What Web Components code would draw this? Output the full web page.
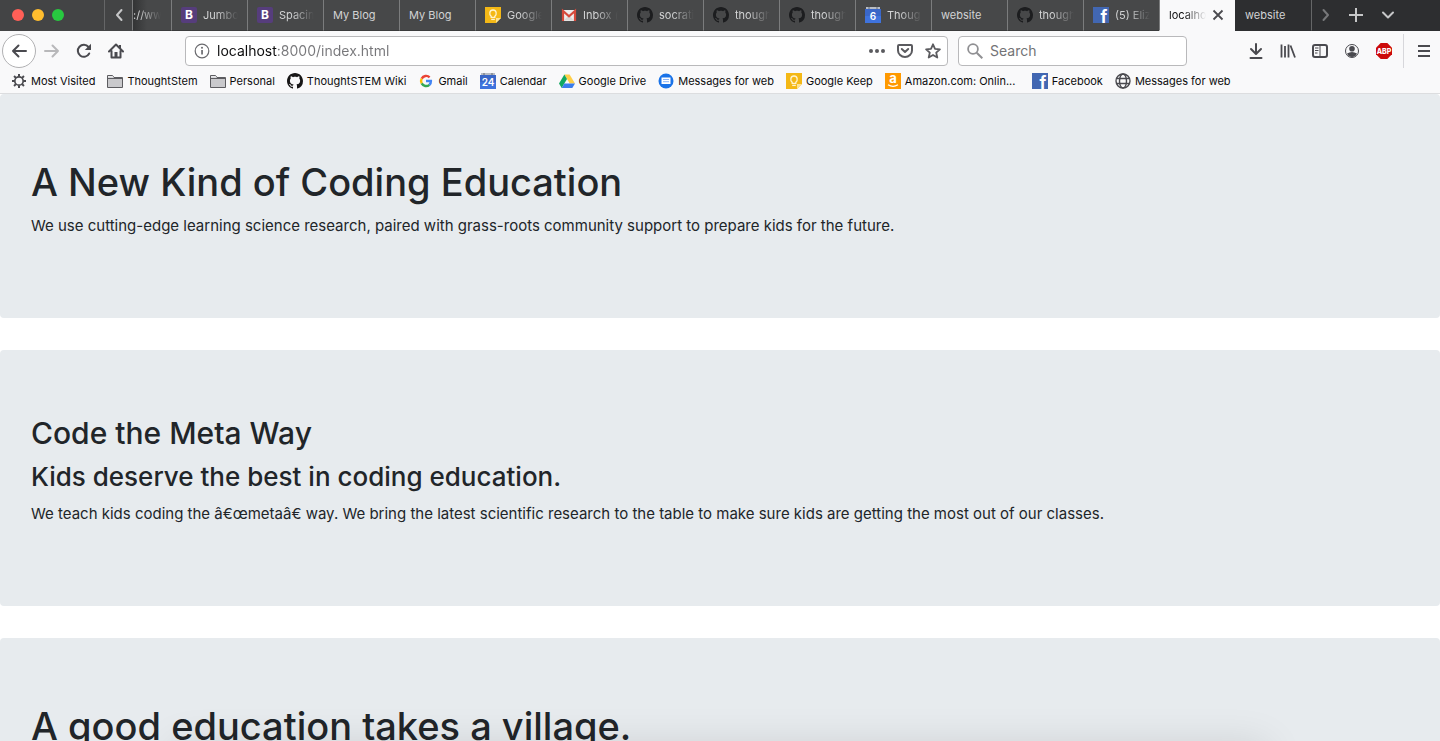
<!DOCTYPE html>
<html lang="en">
<head>
<meta charset="utf-8">
<title>website</title>
<style>
  html, body { margin: 0; height: 100%; }
  body { font-family: Inter, "Liberation Sans", sans-serif; background: #fff; color: #212529; overflow: hidden; }
</style>
</head>
<body>
<browser-window>
  <tab-strip slot="tabs">
    <browser-tab cut>://ww</browser-tab>
    <browser-tab icon="bootstrap">Jumbo</browser-tab>
    <browser-tab icon="bootstrap">Spacin</browser-tab>
    <browser-tab>My Blog</browser-tab>
    <browser-tab>My Blog</browser-tab>
    <browser-tab icon="keep">Google</browser-tab>
    <browser-tab icon="gmail">Inbox (</browser-tab>
    <browser-tab icon="github-dark">socrati</browser-tab>
    <browser-tab icon="github-dark">though</browser-tab>
    <browser-tab icon="github-dark">though</browser-tab>
    <browser-tab icon="cal6">Thoug</browser-tab>
    <browser-tab>website</browser-tab>
    <browser-tab icon="github-dark">though</browser-tab>
    <browser-tab icon="facebook">(5) Eliz</browser-tab>
    <browser-tab active>localho</browser-tab>
    <browser-tab after>website</browser-tab>
  </tab-strip>
  <nav-toolbar slot="nav"></nav-toolbar>
  <bookmark-bar slot="bookmarks">
    <bookmark-item icon="gear">Most Visited</bookmark-item>
    <bookmark-item icon="folder">ThoughtStem</bookmark-item>
    <bookmark-item icon="folder">Personal</bookmark-item>
    <bookmark-item icon="github">ThoughtSTEM Wiki</bookmark-item>
    <bookmark-item icon="google">Gmail</bookmark-item>
    <bookmark-item icon="cal24">Calendar</bookmark-item>
    <bookmark-item icon="drive">Google Drive</bookmark-item>
    <bookmark-item icon="messages">Messages for web</bookmark-item>
    <bookmark-item icon="keep">Google Keep</bookmark-item>
    <bookmark-item icon="amazon" truncated>Amazon.com: Onlin...</bookmark-item>
    <bookmark-item icon="facebook">Facebook</bookmark-item>
    <bookmark-item icon="globe">Messages for web</bookmark-item>
  </bookmark-bar>
  <jumbo-tron>
    <h1 slot="title">A New Kind of Coding Education</h1>
    <p slot="text">We use cutting-edge learning science research, paired with grass-roots community support to prepare kids for the future.</p>
  </jumbo-tron>
  <jumbo-tron>
    <h2 slot="title">Code the Meta Way</h2>
    <h3 slot="subtitle">Kids deserve the best in coding education.</h3>
    <p slot="text">We teach kids coding the â€œmetaâ€ way. We bring the latest scientific research to the table to make sure kids are getting the most out of our classes.</p>
  </jumbo-tron>
  <jumbo-tron>
    <h1 slot="title">A good education takes a village.</h1>
  </jumbo-tron>
</browser-window>

<script>
const GITHUB = 'M8 0C3.58 0 0 3.58 0 8c0 3.54 2.29 6.53 5.47 7.59.4.07.55-.17.55-.38 0-.19-.01-.82-.01-1.49-2.01.37-2.53-.49-2.69-.94-.09-.23-.48-.94-.82-1.13-.28-.15-.68-.52-.01-.53.63-.01 1.08.58 1.23.82.72 1.21 1.87.87 2.33.66.07-.52.28-.87.51-1.07-1.78-.2-3.64-.89-3.64-3.95 0-.87.31-1.59.82-2.15-.08-.2-.36-1.02.08-2.12 0 0 .67-.21 2.2.82.64-.18 1.32-.27 2-.27.68 0 1.36.09 2 .27 1.53-1.04 2.2-.82 2.2-.82.44 1.1.16 1.92.08 2.12.51.56.82 1.27.82 2.15 0 3.07-1.87 3.75-3.65 3.95.29.25.54.73.54 1.48 0 1.07-.01 1.93-.01 2.2 0 .21.15.46.55.38A8.013 8.013 0 0016 8c0-4.42-3.58-8-8-8z';
const calendar = (n, size) => `<path d="M1 0h14v3H1z" fill="#b9bdc4"/><path d="M3 0h2v2H3zM11 0h2v2h-2z" fill="#8f949c"/><path d="M0 2h16v14H0z" fill="#3f73dd"/><path d="M0 2h16v7H0z" fill="#3a67c8"/><text x="8" y="13" font-size="${size}" font-weight="600" text-anchor="middle" fill="#fff">${n}</text>`;
const line = (d, w = 2) => `<path d="${d}" fill="none" stroke="currentColor" stroke-width="${w}" stroke-linecap="round" stroke-linejoin="round"/>`;
const ICONS = {
  bootstrap: '<rect width="16" height="16" rx="2" fill="#563d7c"/><text x="8" y="12" font-size="12" font-weight="700" text-anchor="middle" fill="#fff">B</text>',
  keep: '<path d="M0 0h16v11l-5 5H0z" fill="#f4b816"/><path d="M11 16v-5h5z" fill="#fde293"/><path d="M6.200 9.400C4 7.800 4.200 3 8 3s4 4.800 1.800 6.400v1H6.200z" fill="none" stroke="#fff3cf" stroke-width="1.300"/><path d="M6.200 12.400h3.600" stroke="#fff3cf" stroke-width="1.300"/>',
  gmail: '<path d="M1 3h14v11H1z" fill="#eee"/><path d="M3 13.500 8 8l5 5.500z" fill="#d8d8d8"/><path d="M2 14V4l6 5.300L14 4v10" fill="none" stroke="#d54b3d" stroke-width="2.200"/>',
  'github-dark': `<path d="${GITHUB}" fill="#1c1d1f"/>`,
  github: `<path d="${GITHUB}" fill="#181717"/>`,
  cal6: calendar('6', 10),
  cal24: calendar('24', 10),
  facebook: '<path d="M0 0h16v16H0z" fill="#4267b2"/><text x="11" y="16" font-size="17" font-weight="700" text-anchor="middle" fill="#fff">f</text>',
  gear: '<circle cx="8" cy="8" r="4.200" fill="none" stroke="#4a4a4f" stroke-width="1.700"/><path d="M8 1v2.500M8 12.500V15M1 8h2.500M12.500 8H15M3.050 3.050l1.800 1.800M11.150 11.150l1.800 1.800M3.050 12.950l1.800-1.800M11.150 4.850l1.800-1.800" stroke="#4a4a4f" stroke-width="2"/>',
  folder: '<path d="M.5 14V2.500h5l1.500 2h8.500V14.500H.5z" fill="#c9c9cc" stroke="#5c5c60"/><path d="M1 5.500h14" stroke="#5c5c60"/><path d="M1 3h4.500l1 1.500H1z" fill="#e8e8ea"/>',
  google: '<g fill="none" stroke-width="2.400"><path d="M11.600 4.300A5 5 0 0 0 3.700 5.600" stroke="#ea4335"/><path d="M3.700 5.600a5 5 0 0 0 0 4.800" stroke="#fbbc05"/><path d="M3.700 10.400a5 5 0 0 0 7.700 1.400" stroke="#34a853"/><path d="M11.400 11.800A5 5 0 0 0 12.900 8H8" stroke="#4285f4"/></g>',
  drive: '<path d="M5.400 1.500h5.200L16 10.500h-5.300z" fill="#ffcf48"/><path d="M5.400 1.500 8 6l-5.300 9L0 10.500z" fill="#11a861"/><path d="M5.300 10.500H16L13.300 15H2.700z" fill="#3b7ded"/>',
  messages: '<circle cx="8" cy="8" r="7.500" fill="#1a73e8"/><path d="M3.500 4.500h9v6.500h-7l-2 0z" fill="#fff"/><path d="M5 6.500h6M5 8.700h6" stroke="#8ab4f8"/>',
  amazon: '<path d="M0 0h16v16H0z" fill="#ff9900"/><text x="8" y="10" font-size="13" font-weight="700" text-anchor="middle" fill="#fff">a</text><path d="M3 11.800q5 3 10 0" fill="none" stroke="#fff" stroke-width="1.200"/>',
  globe: '<g fill="none" stroke="#4a4a4f" stroke-width="1.400"><circle cx="8" cy="8" r="7"/><ellipse cx="8" cy="8" rx="3.500" ry="7"/><path d="M1.500 5.500h13M1.500 10.500h13"/></g>',
  back: line('M15 8H2M7.500 2.500 2 8l5.500 5.500'),
  forward: line('M1 8h13M8.500 2.500 14 8l-5.500 5.500'),
  reload: '<path d="M13.200 10.500A6 6 0 1 1 12.500 4" fill="none" stroke="currentColor" stroke-width="2" stroke-linecap="round"/><path d="M15 .8V7H8.800z" fill="currentColor"/>',
  home: line('M1 8.500 8 1.500l7 7M3.500 8v6.500h9V8') + '<path d="M6.500 9h3v6h-3zM11 2h2v4l-2-2z" fill="currentColor"/>',
  info: '<circle cx="8" cy="8" r="6.800" fill="none" stroke="currentColor" stroke-width="1.200"/><path d="M7.200 7h1.700v4.500H7.200z" fill="currentColor"/><circle cx="8" cy="4.800" r="1" fill="currentColor"/>',
  dots: '<g fill="currentColor"><circle cx="2" cy="8" r="2"/><circle cx="8" cy="8" r="2"/><circle cx="14" cy="8" r="2"/></g>',
  pocket: line('M2 2h12q1 0 1 1v4.500a7 6.500 0 0 1-14 0V3q0-1 1-1z') + line('M4.800 6 8 9l3.200-3'),
  star: line('M8 1.300 10 5.800l4.900.5-3.700 3.300 1.100 4.900L8 12l-4.300 2.500 1.100-4.900L1.100 6.300 6 5.800z', 1.8),
  search: '<circle cx="6" cy="6" r="4.900" fill="none" stroke="currentColor" stroke-width="1.800"/><path d="m9.700 9.700 5.600 5.600" stroke="currentColor" stroke-width="2"/>',
  download: line('M8 1v9.500M3 6l5 5 5-5M2.500 15h11'),
  library: '<path d="M1.500 1.500v13M5 3v11.500M8.500 1.500v13M10.500 2.500l4.500 12" fill="none" stroke="currentColor" stroke-width="1.800"/>',
  sidebar: '<rect x="1" y="2" width="14" height="12" rx="2" fill="none" stroke="currentColor" stroke-width="2"/><path d="M8 2v12" stroke="currentColor"/><path d="M3 5h3.500M3 7.500h3.500M3 10h2.500" stroke="currentColor"/>',
  account: '<circle cx="8" cy="8" r="6.500" fill="none" stroke="currentColor"/><circle cx="8" cy="5.800" r="2.800" fill="currentColor"/><path d="M3 10.500q5-3 10 0-1.500 3.500-5 3.500t-5-3.500z" fill="currentColor"/>',
  abp: '<path d="M4.700 0h6.600L16 4.700v6.600L11.300 16H4.700L0 11.300V4.700z" fill="#cc0a0a"/><text x="8" y="11" font-size="7" font-weight="800" text-anchor="middle" fill="#fff">ABP</text>',
  menu: '<path d="M2 3h12M2 8h12M2 13h12" stroke="currentColor" stroke-width="2"/>',
  close: '<path d="m3.500 3.500 9 9m0-9-9 9" stroke="currentColor" stroke-width="1.800"/>',
  plus: '<path d="M8 1v14M1 8h14" stroke="currentColor" stroke-width="2"/>',
  chevdown: line('M3 5.500 8 10.500l5-5'),
  chevleft: line('M10.500 3 6 8l4.500 5'),
  chevright: line('M5.500 3 10 8l-4.500 5')
};

class Base extends HTMLElement {
  render(html) {
    if (!this.shadowRoot) this.attachShadow({ mode: 'open' });
    const t = document.createElement('template');
    t.innerHTML = html;
    this.shadowRoot.replaceChildren(t.content.cloneNode(true));
  }
}

customElements.define('ui-icon', class extends Base {
  connectedCallback() {
    this.render(`<style>
      :host { display: block; flex: none; width: 16px; height: 16px; }
      svg { display: block; width: 100%; height: 100%; }
      text { font-family: Inter, "Liberation Sans", sans-serif; }
    </style><svg viewBox="0 0 16 16" aria-hidden="true">${ICONS[this.getAttribute('name')]}</svg>`);
  }
});

customElements.define('tool-button', class extends Base {
  connectedCallback() {
    this.render(`<style>
      :host { display: block; flex: none; width: 32px; color: #4a4a4f; }
      button { display: flex; align-items: center; justify-content: center; width: 100%; height: 30px; padding: 0; border: 0; background: none; color: inherit; }
      :host([round]) { width: 34px; }
      :host([round]) button { height: 34px; box-sizing: border-box; border: 1px solid #b1b1b3; border-radius: 50%; background: #fff; }
      :host([dim]) { color: #b8b8ba; }
    </style><button aria-label="${this.getAttribute('label')}"><ui-icon name="${this.getAttribute('icon')}"></ui-icon></button>`);
  }
});

customElements.define('browser-tab', class extends Base {
  connectedCallback() {
    const icon = this.getAttribute('icon');
    const active = this.hasAttribute('active');
    this.render(`<style>
      :host { display: flex; flex: none; align-items: center; box-sizing: border-box; width: 76px; height: 31px; padding: 0 9px; gap: 4px;
        border-left: 1px solid #7b7c7d; border-bottom: 1px solid #3a3b3c; background: #474849; color: #d2d3d4; }
      :host([cut]) { width: 39px; padding: 0 10px 0 0; background: linear-gradient(90deg, #333435, #474849 14px); }
      :host([active]) { background: #f9f9fa; color: #0c0c0d; border-bottom-color: #f9f9fa; }
      :host([after]) { width: 77px; background: #2d2e30; border-color: #2d2e30; border-right: 1px solid #656667; }
      .tab { display: flex; flex: 1; min-width: 0; align-items: center; gap: 6px; padding: 0; border: 0; background: none; color: inherit; font: 11px/16px Inter, "Liberation Sans", sans-serif; text-align: left; }
      .label { flex: 1; min-width: 0; overflow: hidden; white-space: nowrap; mask-image: linear-gradient(90deg, #000 calc(100% - 22px), transparent); }
      :host(:not([icon]):not([active]):not([cut])) .label { mask-image: none; }
      .close { display: flex; flex: none; padding: 0; border: 0; background: none; color: #4a4a4f; }
    </style>
    <button class="tab" role="tab" aria-selected="${active}">${icon ? `<ui-icon name="${icon}"></ui-icon>` : ''}<span class="label"><slot></slot></span></button>
    ${active ? '<button class="close" aria-label="Close tab"><ui-icon name="close"></ui-icon></button>' : ''}`);
  }
});

customElements.define('tab-strip', class extends Base {
  connectedCallback() {
    this.render(`<style>
      :host { display: flex; align-items: flex-start; height: 31px; background: linear-gradient(90deg, #434445 0 132px, #2d2e30 132px); }
      .lights { display: flex; flex: none; align-items: center; box-sizing: border-box; width: 104px; height: 30px; padding-left: 12px; gap: 8px; }
      .lights button { width: 12px; height: 12px; padding: 0; border: 0; border-radius: 50%; }
      .red { background: #ff5f57; } .yellow { background: #ffbd2e; } .green { background: #28c940; }
      tool-button { width: 32px; color: #c6c7c8; }
      .scroll { width: 28px; }
      .left { box-sizing: border-box; border-left: 1px solid #656667; }
      .right { color: #77787a; }
      .tabs { display: flex; flex: 0 1 auto; min-width: 0; overflow: hidden; }
    </style>
    <div class="lights"><button class="red" aria-label="Close"></button><button class="yellow" aria-label="Minimize"></button><button class="green" aria-label="Zoom"></button></div>
    <tool-button class="scroll left" icon="chevleft" label="Scroll left"></tool-button>
    <div class="tabs" role="tablist"><slot></slot></div>
    <tool-button class="scroll right" icon="chevright" label="Scroll right"></tool-button>
    <tool-button icon="plus" label="New tab"></tool-button>
    <tool-button icon="chevdown" label="List all tabs"></tool-button>`);
  }
});

const FIELD = `
  :host { display: flex; align-items: center; box-sizing: border-box; height: 30px; min-width: 0; border: 1px solid #b9b9bb; border-radius: 4px; background: #fff; color: #6a6a6e; }
  input { flex: 1; box-sizing: border-box; min-width: 0; height: 28px; margin-left: 7px; padding: 0; border: 0; outline: 0; background: none; font: 14px/28px Inter, "Liberation Sans", sans-serif; }`;

customElements.define('url-bar', class extends Base {
  connectedCallback() {
    this.render(`<style>${FIELD}
      :host { flex: 763 1 763px; padding-left: 8px; }
      input { color: #0c0c0d; -webkit-text-fill-color: transparent; background: linear-gradient(90deg, #0c0c0d 60px, #77777a 60px); -webkit-background-clip: text; background-clip: text; }
      tool-button { width: 28px; color: #5b5b5f; }
    </style><ui-icon name="info"></ui-icon><input aria-label="Address" value="localhost:8000/index.html">
    <tool-button icon="dots" label="Page actions"></tool-button><tool-button icon="pocket" label="Save to Pocket"></tool-button><tool-button icon="star" label="Bookmark"></tool-button>`);
  }
});

customElements.define('search-bar', class extends Base {
  connectedCallback() {
    this.render(`<style>${FIELD}
      :host { flex: 229 1 229px; margin-left: 10px; padding: 0 8px; color: #909093; }
      input::placeholder { color: #737376; opacity: 1; }
    </style><ui-icon name="search"></ui-icon><input aria-label="Search" placeholder="Search">`);
  }
});

customElements.define('nav-toolbar', class extends Base {
  connectedCallback() {
    this.render(`<style>
      :host { display: flex; align-items: center; height: 40px; padding-left: 2px; background: #f9f9fa; }
      .space { flex: 53 1 53px; }
      .sep { flex: none; width: 1px; height: 34px; margin: 0 4px 0 3px; background: #d7d7db; }
    </style>
    <tool-button round icon="back" label="Back"></tool-button>
    <tool-button dim icon="forward" label="Forward"></tool-button>
    <tool-button icon="reload" label="Reload"></tool-button>
    <tool-button icon="home" label="Home"></tool-button>
    <span class="space"></span>
    <url-bar></url-bar>
    <search-bar></search-bar>
    <span class="space"></span>
    <tool-button icon="download" label="Downloads"></tool-button>
    <tool-button icon="library" label="Library"></tool-button>
    <tool-button icon="sidebar" label="Sidebars"></tool-button>
    <tool-button icon="account" label="Account"></tool-button>
    <tool-button icon="abp" label="Adblock Plus"></tool-button>
    <span class="sep"></span>
    <tool-button icon="menu" label="Menu"></tool-button>`);
  }
});

customElements.define('bookmark-bar', class extends Base {
  connectedCallback() {
    this.render(`<style>
      :host { display: flex; align-items: center; height: 20px; padding: 0 11px 2px; gap: 12px; background: #f9f9fa; border-bottom: 1px solid #dcdddf; overflow: hidden; }
    </style><slot></slot>`);
  }
});

customElements.define('bookmark-item', class extends Base {
  connectedCallback() {
    this.render(`<style>
      :host { display: block; flex: none; }
      :host([truncated]) { width: 135px; }
      a { display: flex; align-items: center; gap: 4px; color: #0c0c0d; text-decoration: none; font-size: 11px; line-height: 16px; white-space: nowrap; }
    </style><a href="#"><ui-icon name="${this.getAttribute('icon')}"></ui-icon><span><slot></slot></span></a>`);
  }
});

customElements.define('jumbo-tron', class extends Base {
  connectedCallback() {
    this.render(`<style>
      :host { display: block; margin-bottom: 32px; padding: 64px 31px; border-radius: 4px; background: #e7ebee; color: #212529; }
      ::slotted(*) { margin: 0 0 8px; font-weight: 500; }
      ::slotted(h1) { font-size: 38px; line-height: 48px; }
      ::slotted(h2) { font-size: 30px; line-height: 38px; }
      ::slotted(h3) { font-size: 26px; line-height: 34px; }
      ::slotted(p) { margin-bottom: 16px; font-size: 15px; font-weight: 400; line-height: 24px; }
    </style><slot name="title"></slot><slot name="subtitle"></slot><slot name="text"></slot>`);
  }
});

customElements.define('browser-window', class extends Base {
  connectedCallback() {
    this.render(`<style>
      :host { display: flex; flex-direction: column; height: 100vh; }
      header { flex: none; }
      main { position: relative; flex: 1; min-height: 0; overflow: hidden; background: #fff; }
      /* soft shadow that the desktop dock casts over the window's lower edge */
      .dock-shadow { position: absolute; top: 100%; left: 12%; right: 12%; height: 40px; box-shadow: 0 4px 40px rgba(0, 0, 0, .12); }
    </style>
    <header><slot name="tabs"></slot><slot name="nav"></slot><slot name="bookmarks"></slot></header>
    <main><slot></slot><div class="dock-shadow"></div></main>`);
  }
});
</script>
</body>
</html>
